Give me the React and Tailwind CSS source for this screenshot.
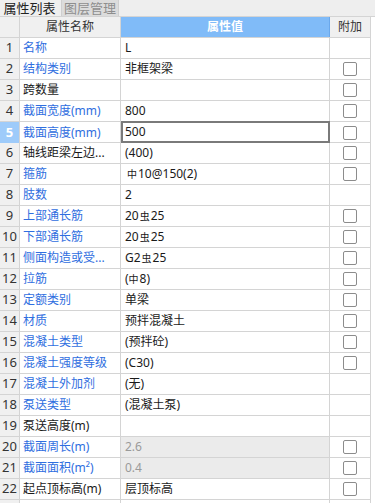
import React from "react";

const FONT = { fontFamily: '"Noto Sans", "Noto Sans CJK SC", sans-serif' };

// steel grade glyphs rendered smaller, like the original app's symbol font
const Hpb = () => <span className="text-[10px] mr-px">中</span>;
const Hrb = () => <span className="text-[10px] mx-px">虫</span>;

const rows = [
  { name: "名称", blue: true, value: "L" },
  { name: "结构类别", blue: true, value: "非框架梁", check: true },
  { name: "跨数量", value: "", check: true },
  { name: "截面宽度(mm)", blue: true, value: "800", check: true },
  { name: "截面高度(mm)", blue: true, value: "500", check: true, selected: true },
  { name: "轴线距梁左边...", value: "(400)", check: true },
  { name: "箍筋", blue: true, value: <><span className="ml-0.5" /><Hpb />10@150(2)</>, check: true },
  { name: "肢数", blue: true, value: "2" },
  { name: "上部通长筋", blue: true, value: <>20<Hrb />25</>, check: true },
  { name: "下部通长筋", blue: true, value: <>20<Hrb />25</>, check: true },
  { name: "侧面构造或受...", blue: true, value: <>G2<Hrb />25</>, check: true },
  { name: "拉筋", blue: true, value: <>(<Hpb />8)</>, check: true },
  { name: "定额类别", blue: true, value: "单梁", check: true },
  { name: "材质", blue: true, value: "预拌混凝土", check: true },
  { name: "混凝土类型", blue: true, value: "(预拌砼)", check: true },
  { name: "混凝土强度等级", blue: true, value: "(C30)", check: true },
  { name: "混凝土外加剂", blue: true, value: "(无)" },
  { name: "泵送类型", blue: true, value: "(混凝土泵)" },
  { name: "泵送高度(m)", value: "" },
  { name: "截面周长(m)", blue: true, value: "2.6", check: true, readonly: true },
  { name: "截面面积(m²)", blue: true, value: "0.4", check: true, readonly: true },
  { name: "起点顶标高(m)", value: "层顶标高", check: true },
];

function Checkbox() {
  return <div className="w-[14px] h-[14px] rounded-[2px] border border-[#8c8c8c] bg-white" />;
}

export default function App() {
  return (
    <div className="w-[375px] h-[503px] overflow-hidden bg-white text-[12px] text-[#1a1a1a]" style={FONT}>
      {/* tabs */}
      <div className="h-[17px] flex bg-[#eeeeee] border-b border-[#d4d4d4]">
        <div className="h-[16px] w-[59px] flex items-center justify-center text-[13px] leading-[16px] text-[#222] bg-[#efefef]">
          属性列表
        </div>
        <div className="h-[16px] w-[58px] ml-[2px] flex items-center justify-center text-[13px] leading-[16px] text-[#8e8e8e] bg-[#dcdcdc] border-x border-[#cfcfcf]">
          图层管理
        </div>
      </div>

      <div className="w-[371px]">
        {/* header */}
        <div className="grid grid-cols-[20px_101px_209px_41px] h-[21px] border-b border-[#d4d4d4]">
          <div className="bg-[#f0f0f0] border-r border-[#d4d4d4]" />
          <div className="bg-[#f0f0f0] border-r border-[#d4d4d4] flex items-center justify-center text-[#333]">属性名称</div>
          <div className="bg-[#80bbf8] border-r border-[#6aa8ec] flex items-center justify-center text-white font-semibold">属性值</div>
          <div className="bg-[#f0f0f0] border-r border-[#d4d4d4] flex items-center justify-center text-[#333]">附加</div>
        </div>

        {rows.map((r, i) => (
          <div key={i} className="grid grid-cols-[20px_101px_209px_41px] h-[21px] border-b border-[#d4d4d4]">
            <div
              className={
                r.selected
                  ? "bg-[#9ecbfa] border-r border-[#d4d4d4] flex items-center justify-center text-white font-bold text-[13px]"
                  : "bg-[#f0f0f0] border-r border-[#d4d4d4] flex items-center justify-center text-[#333] text-[13px]"
              }
            >
              {i + 1}
            </div>
            <div
              className={
                "border-r border-[#d4d4d4] flex items-center pl-[3px] whitespace-nowrap overflow-hidden " +
                (r.blue ? "text-[#2f6ee0]" : "text-[#1a1a1a]")
              }
            >
              {r.name}
            </div>
            {r.selected ? (
              <div className="border-2 border-[#7a7a7a] -mt-px h-[22px] flex items-center pl-[2px] bg-white">{r.value}</div>
            ) : (
              <div
                className={
                  "border-r border-[#d4d4d4] flex items-center pl-[4px] whitespace-nowrap " +
                  (r.readonly ? "bg-[#ebebeb] text-[#9a9a9a]" : "")
                }
              >
                {r.value}
              </div>
            )}
            <div className="border-r border-[#d4d4d4] flex items-center justify-center">
              {r.check && <Checkbox />}
            </div>
          </div>
        ))}
        <div className="grid grid-cols-[20px_101px_209px_41px] h-[6px]">
          <div className="bg-[#f0f0f0] border-r border-[#d4d4d4]" />
          <div className="border-r border-[#d4d4d4]" />
          <div className="border-r border-[#d4d4d4]" />
          <div className="border-r border-[#d4d4d4]" />
        </div>
      </div>
    </div>
  );
}
